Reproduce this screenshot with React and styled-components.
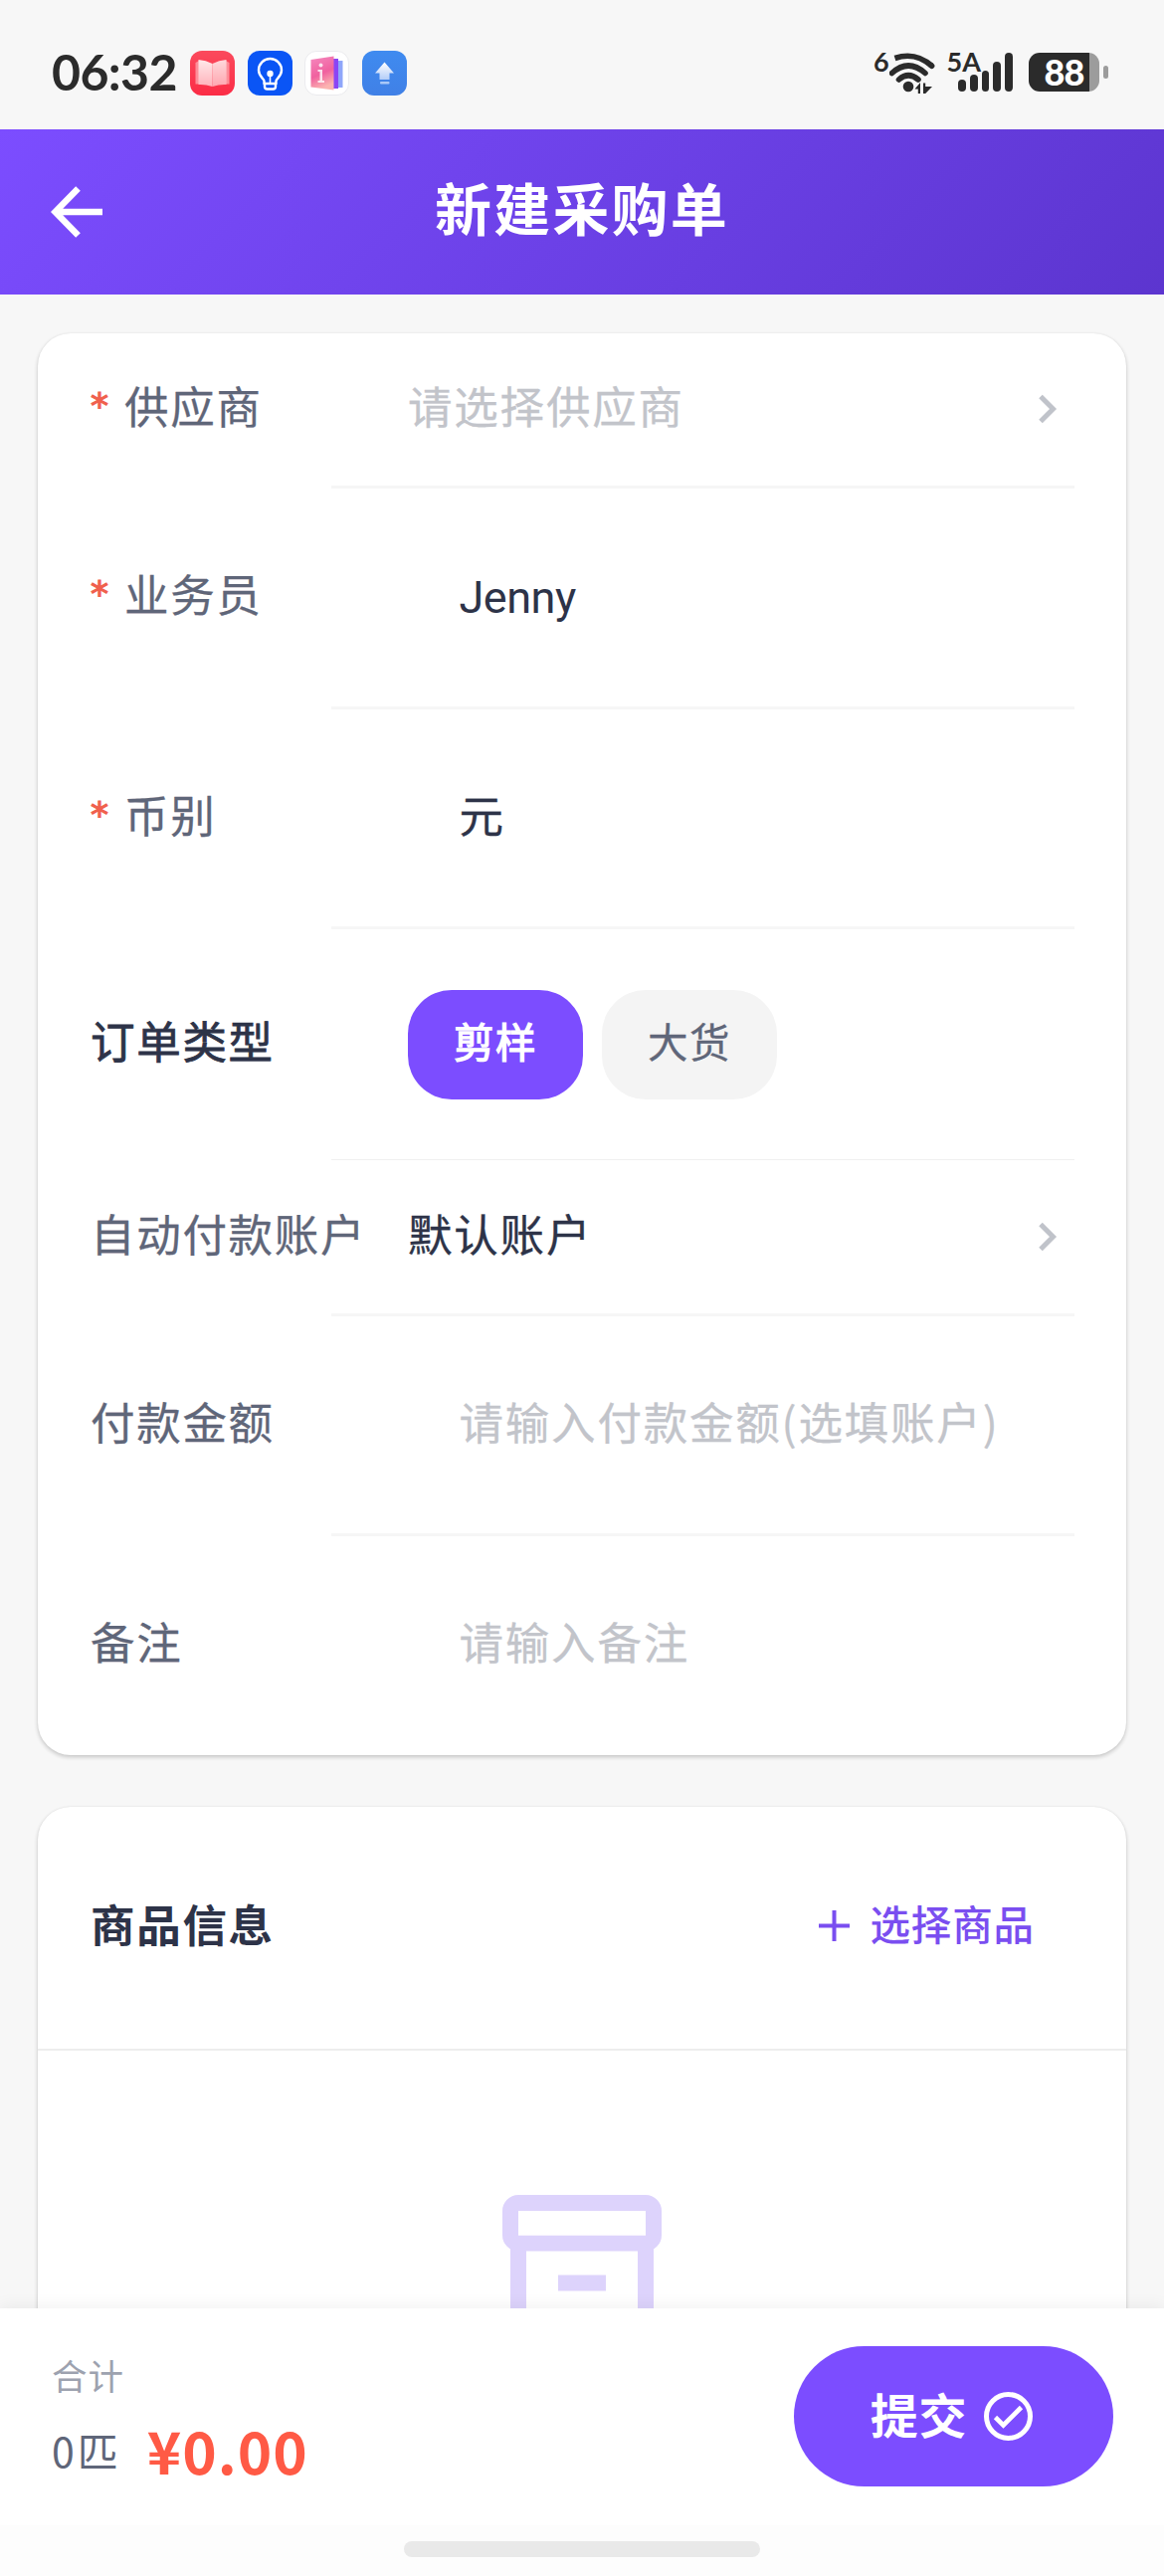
import styled, { createGlobalStyle } from "styled-components";
import { useState } from "react";

const fields = [
  { label: "供应商", required: true, placeholder: "请选择供应商", arrow: true },
  { label: "业务员", required: true, value: "Jenny", latin: true },
  { label: "币别", required: true, value: "元" },
  { label: "订单类型", options: ["剪样", "大货"] },
  { label: "自动付款账户", value: "默认账户", arrow: true },
  { label: "付款金额", placeholder: "请输入付款金额(选填账户)" },
  { label: "备注", placeholder: "请输入备注" },
];

const StatusBar = () => (
  <Status>
    <Clock>06:32</Clock>
    <Apps>
      <svg width="45" height="45" viewBox="0 0 45 45">
        <defs>
          <linearGradient id="book" x1="0" y1="0" x2="0" y2="1">
            <stop offset="0" stopColor="#ffe9ea" />
            <stop offset="1" stopColor="#ffb3bb" />
          </linearGradient>
          <linearGradient id="red" x1="0" y1="0" x2="0" y2="1">
            <stop offset="0" stopColor="#fb4a5c" />
            <stop offset="1" stopColor="#fb2c46" />
          </linearGradient>
        </defs>
        <rect width="45" height="45" rx="12" fill="url(#red)" />
        <path d="M5.500 12L9 10V33.500H5.500Z M39.500 12L36 10V33.500H39.500Z" fill="#fd8f99" />
        <path d="M8.500 9Q16 9.500 22.500 13V36Q15 33.500 8.500 34Z" fill="url(#book)" />
        <path d="M36.500 9Q29 9.500 22.500 13V36Q30 33.500 36.500 34Z" fill="url(#book)" opacity="0.900" />
      </svg>
      <svg width="45" height="45" viewBox="0 0 45 45">
        <rect width="45" height="45" rx="12" fill="#0a55f5" />
        <g fill="none" stroke="#fff" strokeWidth="2.400" strokeLinecap="round" strokeLinejoin="round">
          <path d="M16.500 33V30.500C16.500 28 11 26 11 19.500A11.500 11.500 0 0 1 34 19.500C34 26 28.500 28 28.500 30.500V33Z" />
          <path d="M17 33V36Q17 38.500 19.500 38.500H25.500Q28 38.500 28 36V33" />
          <path d="M22.500 24V32" strokeWidth="1.600" />
        </g>
        <circle cx="22.500" cy="23" r="3.200" fill="#fff" />
      </svg>
      <svg width="45" height="45" viewBox="0 0 45 45">
        <defs>
          <linearGradient id="pink" x1="0" y1="0" x2="0.300" y2="1">
            <stop offset="0" stopColor="#f58ac0" />
            <stop offset="0.600" stopColor="#f0619f" />
            <stop offset="1" stopColor="#fbb3b0" />
          </linearGradient>
        </defs>
        <rect x="0.500" y="0.500" width="44" height="44" rx="11.500" fill="#fff" stroke="#ebebee" />
        <path d="M30 10H38.500V37H30Z" fill="#8fa6fa" />
        <path d="M28 8H34V38H28Z" fill="#8a45f5" />
        <path d="M6.500 9L29.500 5.500V39.500L6.500 36.500Z" fill="url(#pink)" />
        <g fill="#fff" opacity="0.800">
          <circle cx="16.500" cy="14.500" r="2" />
          <path d="M13.500 19H18V30H20V32H13.500V30H15.500V21H13.500Z" />
        </g>
      </svg>
      <svg width="45" height="45" viewBox="0 0 45 45">
        <defs>
          <linearGradient id="sky" x1="0" y1="0" x2="0" y2="1">
            <stop offset="0" stopColor="#3f8bf0" />
            <stop offset="1" stopColor="#4080e6" />
          </linearGradient>
          <linearGradient id="up" x1="0" y1="0" x2="0" y2="1">
            <stop offset="0" stopColor="#fff" />
            <stop offset="1" stopColor="#b3cdf8" />
          </linearGradient>
        </defs>
        <rect width="45" height="45" rx="12" fill="url(#sky)" />
        <path d="M22.500 11.500L32 22.500H27.500V29H17.500V22.500H13Z" fill="url(#up)" />
        <rect x="18" y="31" width="9.500" height="2.500" rx="1" fill="#a9c8f8" />
      </svg>
    </Apps>
    <Signals>
      <NetText>6</NetText>
      <svg width="48" height="41" viewBox="0 0 48 41">
        <g fill="none" stroke="#2b2b2b" strokeWidth="5.600">
          <path d="M5.500 5.500Q26 -1.500 42.500 13.200" />
          <path d="M42 12.700L42.600 13.300" strokeLinecap="round" />
          <path d="M2.500 20.500Q19 5.500 36 20.500" strokeLinecap="round" />
          <path d="M9.500 27Q19 18.500 29 27" strokeLinecap="round" />
        </g>
        <circle cx="19" cy="34" r="5.300" fill="#2b2b2b" />
        <path d="M25.500 36.500L31 30V41H28.800V36.500Z M34 30.500H36.200V34H43L36.200 41H34Z" fill="#2b2b2b" />
      </svg>
      <NetText $left={10}>5A</NetText>
      <Bars>
        {[12, 17, 21, 30, 39].map((h) => (
          <Bar key={h} $height={h} />
        ))}
      </Bars>
      <Battery>
        <span>88</span>
      </Battery>
      <BatteryTip />
    </Signals>
  </Status>
);

const Chevron = () => (
  <svg width="20" height="30" viewBox="0 0 20 30">
    <path d="M3 2.500L15.500 15L3 27.500" fill="none" stroke="#c0c3ca" strokeWidth="5" />
  </svg>
);

const Field = ({ field }) => {
  const [selected, setSelected] = useState(0);
  const { label, required, value, placeholder, arrow, options, latin } = field;

  return (
    <Row $height={arrow ? 156.5 : options ? 232 : 221.5}>
      <Label $dark={!!options}>
        {required && <Star>*</Star>}
        {label}
      </Label>
      <Content $inset={!arrow && !options} $thin={!!options}>
        {options ? (
          options.map((option, index) => (
            <Pill
              key={option}
              $active={index === selected}
              onClick={() => setSelected(index)}
            >
              {option}
            </Pill>
          ))
        ) : (
          <Value $empty={!value} $latin={latin}>
            {value || placeholder}
          </Value>
        )}
        {arrow && <Chevron />}
      </Content>
    </Row>
  );
};

const App = () => {
  return (
    <Page>
      <GlobalStyle />
      <StatusBar />
      <Header>
        <Back>
          <svg width="52" height="52" viewBox="0 0 52 52">
            <path
              d="M27.500 2.500L4.500 26L27.500 49.500M5 26H52"
              fill="none"
              stroke="#fff"
              strokeWidth="6.500"
            />
          </svg>
        </Back>
        <Title>新建采购单</Title>
      </Header>
      <Main>
        <Card>
          {fields.map((field) => (
            <Field key={field.label} field={field} />
          ))}
        </Card>
        <Card>
          <CardHeader>
            <CardTitle>商品信息</CardTitle>
            <AddButton>
              <svg width="31" height="31" viewBox="0 0 31 31">
                <path d="M15.500 0V31M0 15.500H31" stroke="#7a4ef0" strokeWidth="4" />
              </svg>
              <span>选择商品</span>
            </AddButton>
          </CardHeader>
          <Empty>
            <svg width="160" height="160" viewBox="0 0 160 160">
              <g fill="none" stroke="#ddd3fc" strokeWidth="16">
                <rect x="8" y="8" width="144" height="40.500" rx="8" />
                <path d="M16 48V152H144V48" />
                <path d="M56 88.500H104" />
              </g>
              <path d="M16 16H144V40.500H16Z" fill="#fff" />
            </svg>
          </Empty>
        </Card>
      </Main>
      <Footer>
        <Summary>
          <Total>合计</Total>
          <Amount>
            <Count>0匹</Count>
            <Price>¥0.00</Price>
          </Amount>
        </Summary>
        <Submit>
          <span>提交</span>
          <svg width="49" height="49" viewBox="0 0 49 49">
            <circle cx="24.500" cy="24.500" r="22" fill="none" stroke="#fff" strokeWidth="5" />
            <path d="M11.500 25.500L19.500 33.500L37.500 15.500" fill="none" stroke="#fff" strokeWidth="4.600" />
          </svg>
        </Submit>
      </Footer>
      <HomeArea>
        <HomeBar />
      </HomeArea>
    </Page>
  );
};

const GlobalStyle = createGlobalStyle`
  * {
    box-sizing: border-box;
  }

  body {
    margin: 0;
    background: #f7f7f7;
    font-family: "Noto Sans CJK SC", sans-serif;
  }

  svg {
    display: block;
    flex-shrink: 0;
  }

  button {
    border: none;
    padding: 0;
    font-family: inherit;
    cursor: pointer;
  }
`;

const Page = styled.div`
  display: flex;
  flex-direction: column;
  width: 1170px;
  height: 2589px;
  overflow: hidden;
  background: #f7f7f7;
`;

const Status = styled.div`
  display: flex;
  align-items: flex-start;
  flex-shrink: 0;
  height: 130px;
  padding: 51px 56px 0 52px;
`;

const Clock = styled.div`
  width: 139px;
  font-family: Lato, sans-serif;
  font-size: 50px;
  font-weight: 700;
  line-height: 43px;
  letter-spacing: -0.600px;
  color: #2b2b2b;
`;

const Apps = styled.div`
  display: flex;
  gap: 12.700px;
`;

const Signals = styled.div`
  display: flex;
  align-items: flex-start;
  margin-left: auto;
  padding-top: 2px;
`;

const NetText = styled.div`
  margin-left: ${(props) => props.$left || 0}px;
  font-family: Lato, sans-serif;
  font-size: 27px;
  font-weight: 700;
  line-height: 18px;
  color: #2b2b2b;
`;

const Bars = styled.div`
  display: flex;
  align-items: flex-end;
  gap: 4px;
  margin-left: -23px;
`;

const Bar = styled.div`
  width: 7.800px;
  height: ${(props) => props.$height}px;
  border-radius: 4px;
  background: #2b2b2b;
`;

const Battery = styled.div`
  display: flex;
  justify-content: center;
  width: 71px;
  height: 39px;
  margin-left: 16px;
  border-radius: 11px;
  background: linear-gradient(to right, #2b2b2b 61px, #9c9c9c 61px);
  font-family: Lato, sans-serif;
  font-size: 36px;
  font-weight: 900;
  line-height: 39px;
  letter-spacing: -1px;
  color: #fff;
`;

const BatteryTip = styled.div`
  width: 5px;
  height: 13px;
  margin: 13px 0 0 4px;
  border-radius: 3px;
  background: #9c9c9c;
`;

const Header = styled.header`
  display: grid;
  grid-template-columns: 200px 1fr 200px;
  align-items: center;
  flex-shrink: 0;
  height: 166px;
  background: linear-gradient(135deg, #7c4dff, #5c35cf);
`;

const Back = styled.button`
  justify-self: start;
  padding-left: 51px;
  background: transparent;
`;

const Title = styled.h1`
  margin: 0;
  padding-bottom: 12px;
  text-align: center;
  font-size: 57px;
  font-weight: 700;
  letter-spacing: 2.200px;
  color: #fff;
`;

const Main = styled.main`
  display: flex;
  flex-direction: column;
  gap: 52px;
  flex: 1;
  min-height: 0;
  padding: 38.500px 38px 0;
  overflow: hidden;
`;

const Card = styled.section`
  flex-shrink: 0;
  border-radius: 33px;
  background: #fff;
  box-shadow: 0 2px 4px rgba(0, 0, 0, 0.200), 0 0 2px rgba(0, 0, 0, 0.060);
`;

const Row = styled.div`
  display: flex;
  height: ${(props) => props.$height}px;
  padding: 0 52px;

  &:last-child {
    height: 220px;
  }
`;

const Label = styled.div`
  display: flex;
  align-items: center;
  width: 243px;
  padding: 0 0 12px 1px;
  white-space: nowrap;
  font-size: 44.500px;
  letter-spacing: 1.700px;
  color: ${(props) => (props.$dark ? "#2d3348" : "#5f6679")};
  -webkit-text-stroke: ${(props) => (props.$dark ? "0.8px" : "0.3px")} currentColor;
`;

const Star = styled.span`
  width: 34px;
  padding-top: 2px;
  font-family: "DejaVu Sans", sans-serif;
  font-size: 36px;
  color: #f0604d;
  -webkit-text-stroke: 1.200px currentColor;
`;

const Content = styled.div`
  display: flex;
  align-items: center;
  flex: 1;
  padding: 0 17px 0 ${(props) => (props.$inset ? 128.5 : 77)}px;
  border-bottom: ${(props) => (props.$thin ? 1 : 3)}px solid
    ${(props) => (props.$thin ? "#f0f0f0" : "#f6f6f6")};

  ${Row}:last-child & {
    border-color: transparent;
  }
`;

const Value = styled.div`
  flex: 1;
  padding-bottom: ${(props) => (props.$latin ? 0 : 9)}px;
  white-space: nowrap;
  font-family: ${(props) => (props.$latin ? "Roboto," : "")} "Noto Sans CJK SC", sans-serif;
  font-size: ${(props) => (props.$latin ? 45 : 44.5)}px;
  letter-spacing: ${(props) => (props.$latin ? -0.5 : 1.8)}px;
  color: ${(props) => (props.$empty ? "#c2c4ca" : "#2d3348")};
  -webkit-text-stroke: ${(props) => (props.$latin ? 0 : 0.3)}px currentColor;
`;

const Pill = styled.button`
  width: 176px;
  height: 110px;
  margin-right: 19px;
  padding-bottom: 9px;
  border-radius: 44px;
  font-size: 40.500px;
  letter-spacing: 1.400px;
  color: ${(props) => (props.$active ? "#fff" : "#5f6679")};
  background: ${(props) => (props.$active ? "#7c4dff" : "#f4f4f4")};
  -webkit-text-stroke: ${(props) => (props.$active ? "1.3px" : "0.3px")} currentColor;
`;

const CardHeader = styled.div`
  display: flex;
  justify-content: space-between;
  align-items: center;
  height: 245px;
  padding: 0 92px 4px 53px;
  border-bottom: 2px solid #ededed;
`;

const CardTitle = styled.h2`
  margin: 0;
  padding-bottom: 6px;
  font-size: 44.500px;
  font-weight: 700;
  letter-spacing: 1.700px;
  color: #2d3348;
`;

const AddButton = styled.button`
  display: flex;
  align-items: center;
  gap: 20px;
  background: transparent;
  font-size: 40.500px;
  font-weight: 500;
  letter-spacing: 0.900px;
  color: #7a4ef0;

  span {
    padding-bottom: 6px;
  }
`;

const Empty = styled.div`
  display: flex;
  justify-content: center;
  padding: 145px 0 300px;
`;

const Footer = styled.footer`
  display: flex;
  justify-content: space-between;
  align-items: flex-start;
  flex-shrink: 0;
  height: 218px;
  padding: 38px 51px 0 52px;
  background: #fff;
  box-shadow: 0 -2px 16px rgba(0, 0, 0, 0.060);
`;

const Summary = styled.div`
  display: flex;
  flex-direction: column;
`;

const Total = styled.div`
  height: 60px;
  font-size: 35.500px;
  line-height: 58px;
  letter-spacing: 1px;
  color: #9da2af;
`;

const Amount = styled.div`
  display: flex;
  align-items: flex-start;
  gap: 26px;
`;

const Count = styled.span`
  font-size: 41px;
  line-height: 88px;
  letter-spacing: 3px;
  color: #5f6679;
`;

const Price = styled.span`
  font-size: 58.500px;
  font-weight: 700;
  line-height: 87px;
  letter-spacing: 1px;
  color: #ff5a45;
`;

const Submit = styled.button`
  display: flex;
  justify-content: center;
  align-items: center;
  gap: 17px;
  width: 321px;
  height: 141px;
  padding-right: 4px;
  border-radius: 71px;
  background: #7c4dff;
  font-size: 48px;
  font-weight: 700;
  letter-spacing: 0.800px;
  color: #fff;

  span {
    padding-bottom: 7px;
  }
`;

const HomeArea = styled.div`
  display: flex;
  justify-content: center;
  flex-shrink: 0;
  height: 51px;
  padding-top: 16px;
  background: #fdfdfd;
`;

const HomeBar = styled.div`
  width: 358px;
  height: 16px;
  border-radius: 8px;
  background: #e9e9e9;
`;

export default App;
